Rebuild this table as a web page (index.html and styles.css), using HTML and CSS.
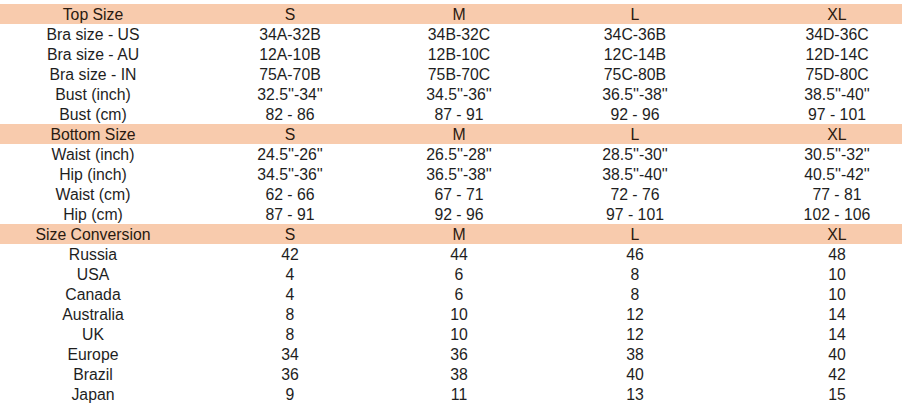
FILE: index.html
```html
<!DOCTYPE html>
<html>
<head>
<meta charset="utf-8">
<link rel="stylesheet" href="styles.css">
</head>
<body>
<div class="sheet">
  <div class="row head"><span>Top Size</span><span>S</span><span>M</span><span>L</span><span>XL</span></div>
  <div class="row"><span>Bra size - US</span><span>34A-32B</span><span>34B-32C</span><span>34C-36B</span><span>34D-36C</span></div>
  <div class="row"><span>Bra size - AU</span><span>12A-10B</span><span>12B-10C</span><span>12C-14B</span><span>12D-14C</span></div>
  <div class="row"><span>Bra size - IN</span><span>75A-70B</span><span>75B-70C</span><span>75C-80B</span><span>75D-80C</span></div>
  <div class="row"><span>Bust (inch)</span><span>32.5''-34''</span><span>34.5''-36''</span><span>36.5''-38''</span><span>38.5''-40''</span></div>
  <div class="row"><span>Bust (cm)</span><span>82 - 86</span><span>87 - 91</span><span>92 - 96</span><span>97 - 101</span></div>
  <div class="row head"><span>Bottom Size</span><span>S</span><span>M</span><span>L</span><span>XL</span></div>
  <div class="row"><span>Waist (inch)</span><span>24.5''-26''</span><span>26.5''-28''</span><span>28.5''-30''</span><span>30.5''-32''</span></div>
  <div class="row"><span>Hip (inch)</span><span>34.5''-36''</span><span>36.5''-38''</span><span>38.5''-40''</span><span>40.5''-42''</span></div>
  <div class="row"><span>Waist (cm)</span><span>62 - 66</span><span>67 - 71</span><span>72 - 76</span><span>77 - 81</span></div>
  <div class="row"><span>Hip (cm)</span><span>87 - 91</span><span>92 - 96</span><span>97 - 101</span><span>102 - 106</span></div>
  <div class="row head"><span>Size Conversion</span><span>S</span><span>M</span><span>L</span><span>XL</span></div>
  <div class="row"><span>Russia</span><span>42</span><span>44</span><span>46</span><span>48</span></div>
  <div class="row"><span>USA</span><span>4</span><span>6</span><span>8</span><span>10</span></div>
  <div class="row"><span>Canada</span><span>4</span><span>6</span><span>8</span><span>10</span></div>
  <div class="row"><span>Australia</span><span>8</span><span>10</span><span>12</span><span>14</span></div>
  <div class="row"><span>UK</span><span>8</span><span>10</span><span>12</span><span>14</span></div>
  <div class="row"><span>Europe</span><span>34</span><span>36</span><span>38</span><span>40</span></div>
  <div class="row"><span>Brazil</span><span>36</span><span>38</span><span>40</span><span>42</span></div>
  <div class="row"><span>Japan</span><span>9</span><span>11</span><span>13</span><span>15</span></div>
</div>
</body>
</html>
```

FILE: styles.css
```css
html, body {
  margin: 0;
  padding: 0;
  background: #ffffff;
  overflow: hidden;
}
.sheet {
  width: 928px;
  padding-top: 4px;
  font-family: "Liberation Sans", Arial, sans-serif;
  font-size: 15.8px;
  color: #1e1e1e;
}
.row {
  display: grid;
  grid-template-columns: 186px 208px 130px 222px 182px;
  box-sizing: border-box;
  height: 20px;
  padding-top: 2px;
  line-height: 18px;
  text-align: center;
  white-space: nowrap;
}
.head {
  background: #f8cbad;
  color: #2a1a10;
}
```
